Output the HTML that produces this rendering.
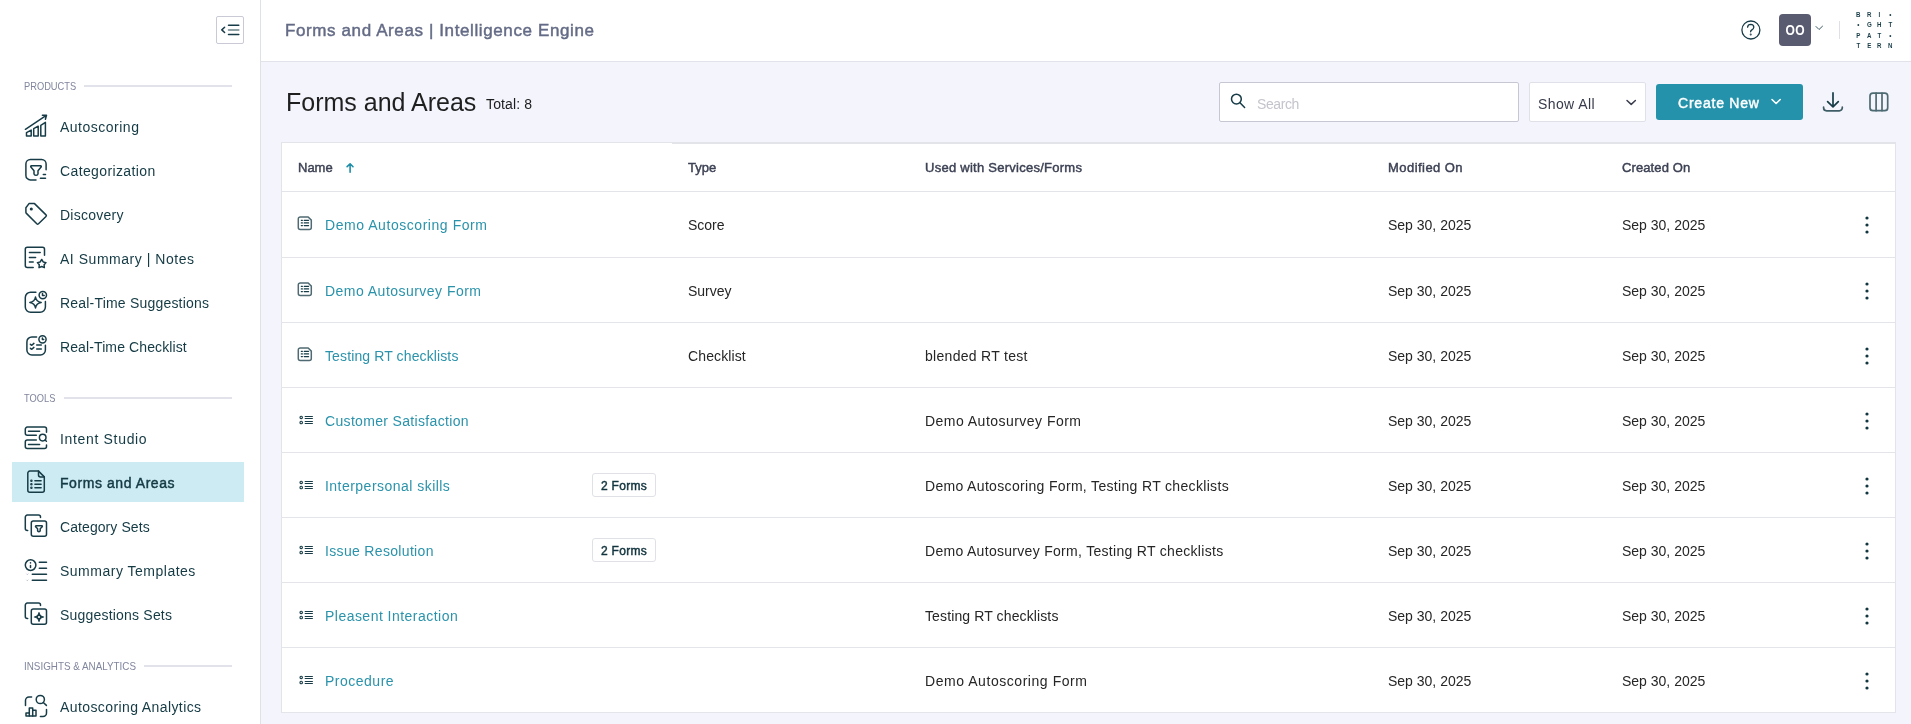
<!DOCTYPE html>
<html><head><meta charset="utf-8">
<style>
*{box-sizing:border-box;margin:0;padding:0}
html,body{width:1911px;height:724px;overflow:hidden;background:#f3f4fc;font-family:"Liberation Sans",sans-serif}
.abs{position:absolute}
#side{position:absolute;left:0;top:0;width:261px;height:724px;background:#fff;border-right:1px solid #e0e1e6}
#hdr{position:absolute;left:261px;top:0;width:1650px;height:62px;background:#fff;border-bottom:1px solid #e2e3ea}
.sec{position:absolute;left:24px;font-size:11px;color:#80869d;white-space:nowrap;transform-origin:0 0;transform:scaleX(0.845);line-height:14px}
.secline{position:absolute;height:2px;background:#e1e2ea;right:28px}
.item{position:absolute;left:60px;font-size:14px;color:#143a44;white-space:nowrap;line-height:20px}
.si{position:absolute;left:20px;width:32px;height:32px}
#active{position:absolute;left:12px;top:462px;width:232px;height:40px;background:#cdebf3}
.th{position:absolute;top:159px;font-size:13px;font-weight:400;-webkit-text-stroke:0.45px currentColor;color:#3d4254;white-space:nowrap;line-height:18px}
.row{position:absolute;left:282px;width:1613px;height:65px;border-bottom:1px solid #e4e5eb}
.cell{position:absolute;font-size:14px;color:#262626;white-space:nowrap;line-height:20px;top:23px}
.link{color:#2a93ab}
.badge{position:absolute;left:310px;top:20px;width:64px;height:24px;border:1px solid #e0e1e7;border-radius:3px;font-size:12px;font-weight:400;-webkit-text-stroke:0.45px currentColor;color:#12343e;text-align:center;line-height:24px;background:#fff;letter-spacing:0.27px}
.ri{position:absolute;left:12px;top:20px;width:24px;height:24px}
.row .ri[stroke]{top:20px}
.kb{position:absolute;left:1581px;top:23px;width:8px;height:20px}
.logo{width:44px;display:grid;grid-template-columns:repeat(4,10.6px);grid-auto-rows:10.4px;font-size:7.5px;font-weight:700;color:#173c47;text-align:center;line-height:10.4px}
.logo span{display:block;transform:scaleX(0.82)}
#w{position:absolute;left:0;top:0;width:1911px;height:724px;will-change:transform}
</style></head><body><div id="w">

<div id="side">
  <div id="active"></div>
  <div class="abs" style="left:216px;top:16px;width:28px;height:28px;border:1px solid #c9cad6;border-radius:2px"></div>
  <svg class="abs" style="left:212px;top:12px;width:36px;height:36px" viewBox="0 0 36 36" stroke-linecap="round" stroke-linejoin="round" fill="none" stroke-width="1.5"><path d="M12.6 15.3L9.8 17.9L12.6 20.5" stroke="#173c47"/><path d="M16.5 13.3H26.8M16.5 22.6H26.8" stroke="#173c47"/><path d="M16.5 17.9H26.8" stroke="#6a8288"/></svg>
  <svg class="si" style="top:110px" viewBox="0 0 32 32" stroke="#173c47" stroke-width="1.5" fill="none" stroke-linecap="round" stroke-linejoin="round"><path d="M5.4 19.3L26.3 5.4M22.4 5.3L26.5 5.2L25.4 9.2"/><path d="M6.5 26.1V22.6L11.2 20.1V26.1Z"/><path d="M13.7 26.1V18.7L18.2 16.2V26.1Z"/><path d="M20.8 26.1V15.3L25.4 12.4V26.1Z"/></svg>
<svg class="si" style="top:154px" viewBox="0 0 32 32" stroke="#173c47" stroke-width="1.5" fill="none" stroke-linecap="round" stroke-linejoin="round"><path d="M26.1 15.8V10A4.5 4.5 0 0 0 21.6 5.5H10.4A4.5 4.5 0 0 0 5.9 10V21.4A4.5 4.5 0 0 0 10.4 25.9H16"/><path d="M11.4 11.8H20.6Q21.7 11.9 21.1 13.1L18 16.8V20Q17.8 21.2 16 21.3Q14.2 21.2 14 20V16.8L10.9 13.1Q10.3 11.9 11.4 11.8Z"/><path d="M23.3 20.6H25.5M20.4 24.3H25.5"/></svg>
<svg class="si" style="top:198px" viewBox="0 0 32 32" stroke="#173c47" stroke-width="1.5" fill="none" stroke-linecap="round" stroke-linejoin="round"><path d="M5.9 9.7L9 5.6H14.5L26 16.9Q26.8 17.7 26 18.5L18.5 25.8Q17.6 26.6 16.8 25.8L6.4 15.4Q5.9 14.9 5.9 14.2Z"/><circle cx="11.3" cy="11" r="0.8" fill="#173c47"/></svg>
<svg class="si" style="top:242px" viewBox="0 0 32 32" stroke="#173c47" stroke-width="1.5" fill="none" stroke-linecap="round" stroke-linejoin="round"><path d="M24.5 13.2V7.2A2 2 0 0 0 22.5 5.2H7.3A2 2 0 0 0 5.3 7.2V23.4A2 2 0 0 0 7.3 25.4H13.2"/><path d="M9.4 10.6H20.2M9.4 15.5H15.6M9.4 19.9H13.2"/><path d="M21.70 17.50 L23.20 19.94 L25.98 20.61 L24.13 22.79 L24.35 25.64 L21.70 24.55 L19.05 25.64 L19.27 22.79 L17.42 20.61 L20.20 19.94 Z"/></svg>
<svg class="si" style="top:286px" viewBox="0 0 32 32" stroke="#173c47" stroke-width="1.5" fill="none" stroke-linecap="round" stroke-linejoin="round"><path d="M15.9 6.2H11A5.3 5.3 0 0 0 5.3 11.5V21A5.3 5.3 0 0 0 10.6 26.3H20.1A5.3 5.3 0 0 0 25.4 21V15.6"/><path d="M15.5 11Q16.2 15.7 21.2 16.4Q16.2 17.1 15.5 22Q14.8 17.1 9.8 16.4Q14.8 15.7 15.5 11Z"/><circle cx="22.8" cy="9.1" r="3.7"/><path d="M22.5 7.5V9.5H24.2"/></svg>
<svg class="si" style="top:330px" viewBox="0 0 32 32" stroke="#173c47" stroke-width="1.5" fill="none" stroke-linecap="round" stroke-linejoin="round"><path d="M16.6 6.9H11.9A5 5 0 0 0 6.9 11.9V19.9A5 5 0 0 0 11.9 24.9H20.4A5 5 0 0 0 25.4 19.9V15.3"/><path d="M10.4 14.3L11.8 15.3L13.9 13.4M10.4 18.3L11.8 19.3L13.9 17.4M16.7 15H21.3M16.7 19H21.3"/><circle cx="22.5" cy="9.3" r="3.6"/><path d="M22.4 7.9V9.5H23.7"/></svg>
<svg class="si" style="top:422px" viewBox="0 0 32 32" stroke="#173c47" stroke-width="1.5" fill="none" stroke-linecap="round" stroke-linejoin="round"><path d="M26.5 10.2V7.1A2 2 0 0 0 24.5 5.1H7.3A2 2 0 0 0 5.3 7.1V11.3A2 2 0 0 0 7.3 13.3H16.3"/><path d="M8.5 9.3H19.6M8.5 22.5H19.6"/><path d="M16.3 18.1H7.3A2 2 0 0 0 5.3 20.1V24.5A2 2 0 0 0 7.3 26.5H24.5A2 2 0 0 0 26.5 24.5V23.1"/><circle cx="22.7" cy="15.6" r="3.3"/><path d="M25.1 18L26.4 19.2"/></svg>
<svg class="si" style="top:466px" viewBox="0 0 32 32" stroke="#173c47" stroke-width="1.5" fill="none" stroke-linecap="round" stroke-linejoin="round"><path d="M18.5 5.1H9.8A2 2 0 0 0 7.8 7.1V24.3A2 2 0 0 0 9.8 26.3H22.3A2 2 0 0 0 24.3 24.3V10.9L18.5 5.1Z"/><path d="M18.5 5.1V9A1.9 1.9 0 0 0 20.4 10.9H24.3"/><path d="M14.9 14.8H21.1M14.9 18.3H21.1M14.9 21.7H21.1"/><circle cx="11.4" cy="14.8" r="0.5" fill="#173c47"/><circle cx="11.4" cy="18.3" r="0.5" fill="#173c47"/><circle cx="11.4" cy="21.7" r="0.5" fill="#173c47"/></svg>
<svg class="si" style="top:510px" viewBox="0 0 32 32" stroke="#173c47" stroke-width="1.5" fill="none" stroke-linecap="round" stroke-linejoin="round"><path d="M20.5 7.6V7.1A2 2 0 0 0 18.5 5.1H7.3A2 2 0 0 0 5.3 7.1V18.5A2 2 0 0 0 7.3 20.5H7.7"/><rect x="11.3" y="11.1" width="15.2" height="15.2" rx="2"/><path d="M16.2 15.8H21.8Q22.7 15.9 22.2 16.7L20.2 18.8V20.6Q20.1 21.7 18.9 21.7Q17.7 21.7 17.6 20.6V18.8L15.6 16.7Q15.2 15.9 16.2 15.8Z"/></svg>
<svg class="si" style="top:554px" viewBox="0 0 32 32" stroke="#173c47" stroke-width="1.5" fill="none" stroke-linecap="round" stroke-linejoin="round"><circle cx="10.6" cy="11.1" r="5.3"/><path d="M10.5 8.7V8.9M10.5 11.4V13.5"/><path d="M19.3 8.2H26.5M19.3 14.2H26.5M12.3 20.2H26.5M12.3 26.3H26.5"/><path d="M6.7 20L7.3 20.6L8 19.9M6.7 26.1L7.3 26.7L8 26" stroke-width="0.6" stroke="#8aa0a6"/></svg>
<svg class="si" style="top:598px" viewBox="0 0 32 32" stroke="#173c47" stroke-width="1.5" fill="none" stroke-linecap="round" stroke-linejoin="round"><path d="M20.5 7.6V7.1A2 2 0 0 0 18.5 5.1H7.3A2 2 0 0 0 5.3 7.1V18.5A2 2 0 0 0 7.3 20.5H7.7"/><rect x="11.3" y="11.1" width="15.2" height="15.2" rx="2"/><path d="M19 14.5Q19.6 18.4 23.6 19Q19.6 19.6 19 23.4Q18.4 19.6 14.4 19Q18.4 18.4 19 14.5Z" fill="#173c47" stroke-width="1.2"/><circle cx="19" cy="19" r="1.1" fill="#fff" stroke="none"/></svg>
<svg class="si" style="top:690px" viewBox="0 0 32 32" stroke="#173c47" stroke-width="1.5" fill="none" stroke-linecap="round" stroke-linejoin="round"><path d="M5.5 15.4V10.5A3.5 3.5 0 0 1 9 7H11.6"/><circle cx="20.3" cy="9.5" r="4.1"/><path d="M23.3 12.5L26.4 15.4"/><path d="M26.5 19.6V23A3.5 3.5 0 0 1 23 26.5H20.4"/><path d="M6 26.1V22.9H9.3V17.9H12.7V20.3H16V26.1Z"/><path d="M9.3 22.9V26.1M12.7 20.3V26.1"/></svg>
<div class="sec" style="top:79px">PRODUCTS</div><div class="secline" style="left:84px;top:85px"></div>
  <div class="item" style="top:117px;letter-spacing:0.5px">Autoscoring</div>
  <div class="item" style="top:161px;letter-spacing:0.38px">Categorization</div>
  <div class="item" style="top:205px;letter-spacing:0.25px">Discovery</div>
  <div class="item" style="top:249px;letter-spacing:0.53px">AI Summary | Notes</div>
  <div class="item" style="top:293px;letter-spacing:0.2px">Real-Time Suggestions</div>
  <div class="item" style="top:337px;letter-spacing:0.11px">Real-Time Checklist</div>
  <div class="sec" style="top:391px">TOOLS</div><div class="secline" style="left:64px;top:397px"></div>
  <div class="item" style="top:429px;letter-spacing:0.67px">Intent Studio</div>
  <div class="item" style="top:473px;font-weight:400;-webkit-text-stroke:0.45px currentColor;letter-spacing:0.57px">Forms and Areas</div>
  <div class="item" style="top:517px;letter-spacing:0.08px">Category Sets</div>
  <div class="item" style="top:561px;letter-spacing:0.5px">Summary Templates</div>
  <div class="item" style="top:605px;letter-spacing:0.2px">Suggestions Sets</div>
  <div class="sec" style="top:659px;transform:scaleX(0.895)">INSIGHTS &amp; ANALYTICS</div><div class="secline" style="left:144px;top:665px"></div>
  <div class="item" style="top:697px;letter-spacing:0.4px">Autoscoring Analytics</div>
</div>

<div id="hdr">
  <div class="abs" style="left:24px;top:21px;font-size:17px;font-weight:400;-webkit-text-stroke:0.45px currentColor;color:#646b86;white-space:nowrap;letter-spacing:0.61px">Forms and Areas | Intelligence Engine</div>
  <svg class="abs" style="left:1475px;top:14px;width:30px;height:30px" viewBox="0 0 30 30" fill="none" stroke="#173c47" stroke-width="1.3" stroke-linecap="round"><circle cx="14.9" cy="16" r="9"/><path d="M11.6 13.2Q11.8 10.4 14.8 10.4Q17.8 10.5 17.8 13.2Q17.7 14.9 15.9 15.9Q14.6 16.7 14.6 17.8"/><circle cx="14.7" cy="20.4" r="0.35" fill="#173c47"/></svg>
  <div class="abs" style="left:1518px;top:14px;width:32px;height:32px;background:#595c71;border-radius:4px;color:#fff;font-size:14px;font-weight:700;text-align:center;line-height:32px"><span style="display:inline-block;transform:scaleX(0.86);letter-spacing:0.4px">OO</span></div>
  <svg class="abs" style="left:1553px;top:23px;width:10px;height:8px" viewBox="0 0 10 8" fill="none" stroke="#3b5a63" stroke-width="1" stroke-linecap="round"><path d="M2 3.5L5 6.5L8.5 3.2"/></svg>
  <div class="abs" style="left:1578px;top:21px;width:1px;height:18px;background:#dfe0e6"></div>
  <div class="abs logo" style="left:1592px;top:10px">
    <span>B</span><span>R</span><span>I</span><span>&#8226;</span>
    <span>&#8226;</span><span>G</span><span>H</span><span>T</span>
    <span>P</span><span>A</span><span>T</span><span>&#8226;</span>
    <span>T</span><span>E</span><span>R</span><span>N</span>
  </div>
</div>

<!-- toolbar -->
<div class="abs" style="left:286px;top:88px;font-size:25px;color:#1f1f1f;white-space:nowrap">Forms and Areas</div>
<div class="abs" style="left:486px;top:96px;font-size:14px;color:#1c1c1c;white-space:nowrap;letter-spacing:0.14px">Total: 8</div>
<div class="abs" style="left:1219px;top:82px;width:300px;height:40px;background:#fff;border:1px solid #c6c7d3;border-radius:2px"></div>
<div class="abs" style="left:1257px;top:96px;font-size:14px;color:#c4c4cc;letter-spacing:-0.4px">Search</div>
<div class="abs" style="left:1529px;top:82px;width:117px;height:40px;background:#fff;border:1px solid #e0e1e8;border-radius:2px"></div>
<div class="abs" style="left:1538px;top:96px;font-size:14px;color:#363a4a;letter-spacing:0.4px">Show All</div>
<div class="abs" style="left:1656px;top:84px;width:147px;height:36px;background:#2592ab;border-radius:3px"></div>
<div class="abs" style="left:1678px;top:95px;font-size:14px;font-weight:400;-webkit-text-stroke:0.45px currentColor;color:#fff;letter-spacing:0.78px">Create New</div>


<svg class="abs" style="left:1226px;top:90px;width:24px;height:24px" viewBox="0 0 24 24" fill="none" stroke="#173c47" stroke-width="1.5" stroke-linecap="round"><circle cx="10.4" cy="9.1" r="4.9"/><path d="M14 12.7L18.6 17.4"/></svg>
<svg class="abs" style="left:1620px;top:94px;width:20px;height:16px" viewBox="0 0 20 16" fill="none" stroke="#3a3e4d" stroke-width="1.5" stroke-linecap="round" stroke-linejoin="round"><path d="M7 6.5L11.2 10.4L15.4 6.5"/></svg>
<svg class="abs" style="left:1766px;top:94px;width:20px;height:14px" viewBox="0 0 20 14" fill="none" stroke="#fff" stroke-width="1.6" stroke-linecap="round" stroke-linejoin="round"><path d="M6 5.5L10.1 9.5L14.2 5.5"/></svg>
<svg class="abs" style="left:1818px;top:88px;width:76px;height:28px" viewBox="0 0 76 28" fill="none" stroke="#173c47" stroke-width="1.7" stroke-linecap="round" stroke-linejoin="round"><path d="M15 4.9V18.3M9.6 13.6L15 18.8L20.3 13.6" /><path d="M5.6 19.2V19.8A3 3 0 0 0 8.6 22.8H21.3A3 3 0 0 0 24.3 19.8V19.2" stroke="#3f5d66"/><rect x="52" y="5.1" width="17.7" height="17.6" rx="3" stroke="#4d6a73"/><path d="M58.1 5.1V22.7M64 5.1V22.7" stroke="#4d6a73"/></svg>

<!-- table -->
<div class="abs" style="left:281px;top:142px;width:1615px;height:571px;background:#fff;border:1px solid #e3e4ea"></div>
<div class="abs" style="left:282px;top:191px;width:1613px;height:1px;background:#e3e4ea"></div>
<div class="abs" style="left:672px;top:143px;width:1223px;height:1px;background:#e3e4ea"></div>
<div class="th" style="left:298px">Name</div>
<svg class="abs" style="left:340px;top:158px;width:20px;height:20px" viewBox="0 0 20 20" fill="none" stroke="#1f8ea8" stroke-width="1.6" stroke-linecap="round" stroke-linejoin="round"><path d="M10.1 6V14.2M7.1 8.7L10.1 5.8L13 8.7"/></svg>
<div class="th" style="left:688px">Type</div>
<div class="th" style="left:925px;letter-spacing:0.26px">Used with Services/Forms</div>
<div class="th" style="left:1388px;letter-spacing:0.45px">Modified On</div>
<div class="th" style="left:1622px;letter-spacing:0.11px">Created On</div>

<div class="row" style="top:192px;height:66px"><svg class="ri" viewBox="0 0 24 24" fill="none" stroke-linecap="round" stroke-linejoin="round"><path d="M6.2 5H14.2L17.3 8.1V15.6A2 2 0 0 1 15.3 17.6H6.3A2 2 0 0 1 4.3 15.6V6.9A1.9 1.9 0 0 1 6.2 5Z" stroke="#4f6a72" stroke-width="1.5"/><path d="M7.3 8.3H8.4M10.2 8.3H14.6M7.3 10.9H8.4M10.2 10.9H14.6M7.3 13.6H8.4M10.2 13.6H14.6" stroke="#173c47" stroke-width="1.2"/></svg><div class="cell link" style="left:43px;letter-spacing:0.55px">Demo Autoscoring Form</div><div class="cell" style="left:406px;letter-spacing:0px">Score</div><div class="cell" style="left:1106px">Sep 30, 2025</div><div class="cell" style="left:1340px">Sep 30, 2025</div><svg class="kb" viewBox="0 0 8 20" fill="#12363f"><circle cx="4" cy="3" r="1.6"/><circle cx="4" cy="10" r="1.6"/><circle cx="4" cy="17" r="1.6"/></svg></div>
<div class="row" style="top:258px;height:65px"><svg class="ri" viewBox="0 0 24 24" fill="none" stroke-linecap="round" stroke-linejoin="round"><path d="M6.2 5H14.2L17.3 8.1V15.6A2 2 0 0 1 15.3 17.6H6.3A2 2 0 0 1 4.3 15.6V6.9A1.9 1.9 0 0 1 6.2 5Z" stroke="#4f6a72" stroke-width="1.5"/><path d="M7.3 8.3H8.4M10.2 8.3H14.6M7.3 10.9H8.4M10.2 10.9H14.6M7.3 13.6H8.4M10.2 13.6H14.6" stroke="#173c47" stroke-width="1.2"/></svg><div class="cell link" style="left:43px;letter-spacing:0.47px">Demo Autosurvey Form</div><div class="cell" style="left:406px;letter-spacing:0px">Survey</div><div class="cell" style="left:1106px">Sep 30, 2025</div><div class="cell" style="left:1340px">Sep 30, 2025</div><svg class="kb" viewBox="0 0 8 20" fill="#12363f"><circle cx="4" cy="3" r="1.6"/><circle cx="4" cy="10" r="1.6"/><circle cx="4" cy="17" r="1.6"/></svg></div>
<div class="row" style="top:323px;height:65px"><svg class="ri" viewBox="0 0 24 24" fill="none" stroke-linecap="round" stroke-linejoin="round"><path d="M6.2 5H14.2L17.3 8.1V15.6A2 2 0 0 1 15.3 17.6H6.3A2 2 0 0 1 4.3 15.6V6.9A1.9 1.9 0 0 1 6.2 5Z" stroke="#4f6a72" stroke-width="1.5"/><path d="M7.3 8.3H8.4M10.2 8.3H14.6M7.3 10.9H8.4M10.2 10.9H14.6M7.3 13.6H8.4M10.2 13.6H14.6" stroke="#173c47" stroke-width="1.2"/></svg><div class="cell link" style="left:43px;letter-spacing:0.12px">Testing RT checklists</div><div class="cell" style="left:406px;letter-spacing:0.12px">Checklist</div><div class="cell" style="left:643px;letter-spacing:0.29px">blended RT test</div><div class="cell" style="left:1106px">Sep 30, 2025</div><div class="cell" style="left:1340px">Sep 30, 2025</div><svg class="kb" viewBox="0 0 8 20" fill="#12363f"><circle cx="4" cy="3" r="1.6"/><circle cx="4" cy="10" r="1.6"/><circle cx="4" cy="17" r="1.6"/></svg></div>
<div class="row" style="top:388px;height:65px"><svg class="ri" viewBox="0 0 24 24" fill="none" stroke-linecap="round" stroke="#173c47"><rect x="6" y="8.2" width="2.4" height="2.4" rx="1" stroke-width="1.1"/><rect x="6" y="13.3" width="2.4" height="2.4" rx="1" stroke-width="1.1"/><path d="M11.2 8.5H18.4M11.2 10.5H18.4M11.2 13.5H18.4M11.2 15.5H18.4" stroke-width="1.2"/></svg><div class="cell link" style="left:43px;letter-spacing:0.33px">Customer Satisfaction</div><div class="cell" style="left:643px;letter-spacing:0.47px">Demo Autosurvey Form</div><div class="cell" style="left:1106px">Sep 30, 2025</div><div class="cell" style="left:1340px">Sep 30, 2025</div><svg class="kb" viewBox="0 0 8 20" fill="#12363f"><circle cx="4" cy="3" r="1.6"/><circle cx="4" cy="10" r="1.6"/><circle cx="4" cy="17" r="1.6"/></svg></div>
<div class="row" style="top:453px;height:65px"><svg class="ri" viewBox="0 0 24 24" fill="none" stroke-linecap="round" stroke="#173c47"><rect x="6" y="8.2" width="2.4" height="2.4" rx="1" stroke-width="1.1"/><rect x="6" y="13.3" width="2.4" height="2.4" rx="1" stroke-width="1.1"/><path d="M11.2 8.5H18.4M11.2 10.5H18.4M11.2 13.5H18.4M11.2 15.5H18.4" stroke-width="1.2"/></svg><div class="cell link" style="left:43px;letter-spacing:0.47px">Interpersonal skills</div><div class="badge">2 Forms</div><div class="cell" style="left:643px;letter-spacing:0.33px">Demo Autoscoring Form, Testing RT checklists</div><div class="cell" style="left:1106px">Sep 30, 2025</div><div class="cell" style="left:1340px">Sep 30, 2025</div><svg class="kb" viewBox="0 0 8 20" fill="#12363f"><circle cx="4" cy="3" r="1.6"/><circle cx="4" cy="10" r="1.6"/><circle cx="4" cy="17" r="1.6"/></svg></div>
<div class="row" style="top:518px;height:65px"><svg class="ri" viewBox="0 0 24 24" fill="none" stroke-linecap="round" stroke="#173c47"><rect x="6" y="8.2" width="2.4" height="2.4" rx="1" stroke-width="1.1"/><rect x="6" y="13.3" width="2.4" height="2.4" rx="1" stroke-width="1.1"/><path d="M11.2 8.5H18.4M11.2 10.5H18.4M11.2 13.5H18.4M11.2 15.5H18.4" stroke-width="1.2"/></svg><div class="cell link" style="left:43px;letter-spacing:0.33px">Issue Resolution</div><div class="badge">2 Forms</div><div class="cell" style="left:643px;letter-spacing:0.3px">Demo Autosurvey Form, Testing RT checklists</div><div class="cell" style="left:1106px">Sep 30, 2025</div><div class="cell" style="left:1340px">Sep 30, 2025</div><svg class="kb" viewBox="0 0 8 20" fill="#12363f"><circle cx="4" cy="3" r="1.6"/><circle cx="4" cy="10" r="1.6"/><circle cx="4" cy="17" r="1.6"/></svg></div>
<div class="row" style="top:583px;height:65px"><svg class="ri" viewBox="0 0 24 24" fill="none" stroke-linecap="round" stroke="#173c47"><rect x="6" y="8.2" width="2.4" height="2.4" rx="1" stroke-width="1.1"/><rect x="6" y="13.3" width="2.4" height="2.4" rx="1" stroke-width="1.1"/><path d="M11.2 8.5H18.4M11.2 10.5H18.4M11.2 13.5H18.4M11.2 15.5H18.4" stroke-width="1.2"/></svg><div class="cell link" style="left:43px;letter-spacing:0.47px">Pleasent Interaction</div><div class="cell" style="left:643px;letter-spacing:0.12px">Testing RT checklists</div><div class="cell" style="left:1106px">Sep 30, 2025</div><div class="cell" style="left:1340px">Sep 30, 2025</div><svg class="kb" viewBox="0 0 8 20" fill="#12363f"><circle cx="4" cy="3" r="1.6"/><circle cx="4" cy="10" r="1.6"/><circle cx="4" cy="17" r="1.6"/></svg></div>
<div class="row" style="top:648px;height:65px"><svg class="ri" viewBox="0 0 24 24" fill="none" stroke-linecap="round" stroke="#173c47"><rect x="6" y="8.2" width="2.4" height="2.4" rx="1" stroke-width="1.1"/><rect x="6" y="13.3" width="2.4" height="2.4" rx="1" stroke-width="1.1"/><path d="M11.2 8.5H18.4M11.2 10.5H18.4M11.2 13.5H18.4M11.2 15.5H18.4" stroke-width="1.2"/></svg><div class="cell link" style="left:43px;letter-spacing:0.5px">Procedure</div><div class="cell" style="left:643px;letter-spacing:0.55px">Demo Autoscoring Form</div><div class="cell" style="left:1106px">Sep 30, 2025</div><div class="cell" style="left:1340px">Sep 30, 2025</div><svg class="kb" viewBox="0 0 8 20" fill="#12363f"><circle cx="4" cy="3" r="1.6"/><circle cx="4" cy="10" r="1.6"/><circle cx="4" cy="17" r="1.6"/></svg></div>
</div></body></html>
